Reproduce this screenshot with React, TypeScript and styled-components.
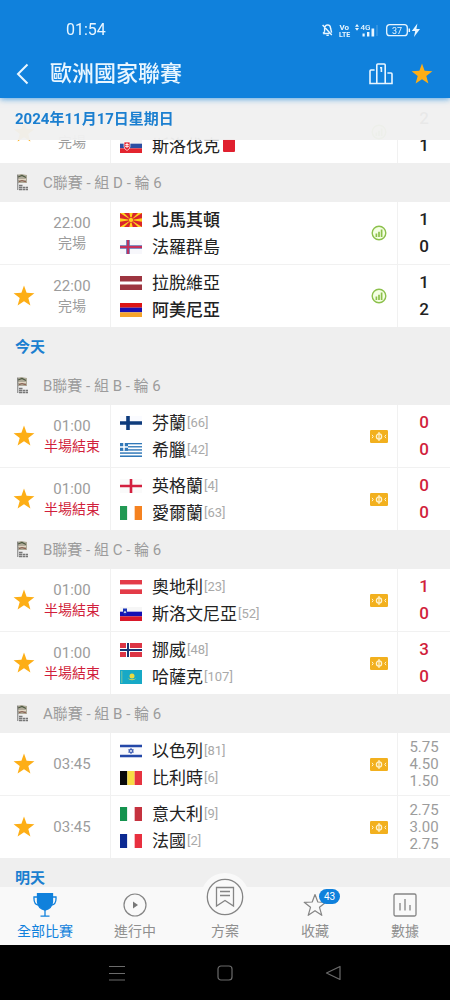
import React from "react";
import styled, { createGlobalStyle, css } from "styled-components";

const color = {
  blue: "#1081dc",
  link: "#1b7fd0",
  band: "#efefef",
  line: "#f1f1f1",
  muted: "#9c9c9c",
  ink: "#222",
  red: "#d11f3c",
  star: "#fdae16",
};

const GlobalStyle = createGlobalStyle`
  *, *::before, *::after { box-sizing: border-box; }
  body {
    margin: 0;
    background: #000;
    font-family: Roboto, "Noto Sans CJK TC", sans-serif;
    color: ${color.ink};
  }
  button { border: 0; padding: 0; background: none; font: inherit; color: inherit; cursor: pointer; }
  ul { list-style: none; margin: 0; padding: 0; }
  h1, h2, h3 { margin: 0; font-weight: inherit; font-size: inherit; }
  svg { display: block; }
`;

const Screen = styled.div`
  display: flex;
  flex-direction: column;
  height: 100vh;
`;

const Header = styled.header`
  position: relative;
  z-index: 3;
  flex: none;
  background: ${color.blue};
  color: #e9f6ff;
  box-shadow: 0 1px 6px rgba(16, 129, 220, 0.7);
`;

const StatusBar = styled.div`
  display: flex;
  align-items: center;
  justify-content: space-between;
  height: 49px;
  padding: 10px 28px 0 66px;
  font-size: 16px;
`;

const TitleBar = styled.div`
  display: flex;
  align-items: center;
  height: 49px;
  padding: 0 16px 0 14px;
`;

const IconButton = styled.button<{ $width: number }>`
  display: grid;
  place-items: center;
  width: ${(p) => p.$width}px;
  height: 40px;
`;

const Title = styled.h1`
  flex: 1;
  padding-left: 20px;
  font-size: 22px;
  font-weight: 500;
  line-height: 32px;
`;

const TitleActions = styled.div`
  display: flex;
  gap: 16px;
`;

const Feed = styled.main`
  flex: 1;
  min-height: 0;
  overflow-y: auto;
  scrollbar-width: none;
  background: #fff;
`;

const DayHeading = styled.h2<{ $pinned?: boolean }>`
  display: flex;
  align-items: center;
  height: 39px;
  padding: 0 15px;
  background: ${color.band};
  color: ${color.link};
  font-size: 15px;
  font-weight: 700;
  line-height: 22px;
  ${(p) =>
    p.$pinned &&
    css`
      position: sticky;
      top: 0;
      z-index: 2;
      height: 42px;
      margin-bottom: -39px;
      background: rgba(240, 240, 240, 0.96);
    `}
`;

const GroupHeading = styled.h3`
  display: flex;
  align-items: center;
  gap: 15px;
  height: 39px;
  padding: 0 17px;
  background: ${color.band};
  color: ${color.muted};
  font-size: 15px;
  line-height: 20px;
`;

const MatchList = styled.ul`
  > li + li { border-top: 1px solid ${color.line}; }
`;

const MatchRow = styled.li`
  display: grid;
  grid-template-columns: 48px 63px minmax(0, 1fr) 37px 52px;
  box-sizing: content-box;
  height: 62px;
`;

const StarCell = styled.div`
  display: grid;
  place-items: center;
`;

const TimeCell = styled.div`
  display: flex;
  flex-direction: column;
  justify-content: center;
  align-items: center;
  padding-right: 14px;
  border-right: 1px solid ${color.line};
  white-space: nowrap;
  color: ${color.muted};
  font-size: 15px;
  line-height: 20px;
`;

const MatchState = styled.span<{ $live?: boolean }>`
  display: flex;
  justify-content: center;
  width: 0;
  color: ${(p) => (p.$live ? color.red : color.muted)};
  font-size: 14px;
`;

const Teams = styled.div`
  display: flex;
  flex-direction: column;
  justify-content: center;
  padding-left: 9px;
`;

const TeamLine = styled.div<{ $strong?: boolean }>`
  display: flex;
  align-items: center;
  height: 27px;
  font-size: 17px;
  line-height: 26px;
  font-weight: ${(p) => (p.$strong ? 500 : 400)};
  white-space: nowrap;
`;

const FlagBox = styled.span`
  flex: none;
  width: 22px;
  margin-right: 10px;
`;

const Rank = styled.span`
  padding-left: 1px;
  color: #a9a9a9;
  font-size: 13px;
`;

const RedCard = styled.span`
  width: 12px;
  height: 13px;
  margin-left: 3px;
  border-radius: 1px;
  background: #e0202f;
`;

const MarkCell = styled.div`
  display: grid;
  place-items: center;
  border-right: 1px solid ${color.line};
`;

const ScoreCell = styled.div<{ $live?: boolean }>`
  display: flex;
  flex-direction: column;
  align-items: center;
  justify-content: center;
  color: ${(p) => (p.$live ? color.red : color.ink)};
  font-size: 17px;
  font-weight: 500;
  line-height: 27px;
`;

const OddsCell = styled(ScoreCell)`
  color: ${color.muted};
  font-size: 15px;
  font-weight: 400;
  line-height: 17px;
`;

const TabBar = styled.nav`
  position: relative;
  z-index: 2;
  flex: none;
  display: grid;
  grid-template-columns: repeat(5, minmax(0, 1fr));
  grid-template-rows: 58px;
  background: #f9f9f9;
`;

const Tab = styled.button<{ $active?: boolean }>`
  display: flex;
  flex-direction: column;
  align-items: center;
  justify-content: flex-end;
  gap: 4px;
  height: 58px;
  padding-bottom: 4px;
  color: ${(p) => (p.$active ? color.blue : "#8f8f8f")};
  font-size: 14px;
  line-height: 20px;
`;

const TabIcon = styled.span`
  position: relative;
  display: block;
`;

const RaisedIcon = styled.span`
  flex: none;
  display: grid;
  place-items: center;
  width: 48px;
  height: 48px;
  margin-bottom: -4px;
  border-radius: 50%;
  background: #f9f9f9;
`;

const Badge = styled.span`
  position: absolute;
  top: -4px;
  left: 16px;
  width: 21px;
  border-radius: 8px;
  background: ${color.blue};
  color: #fff;
  font-size: 10px;
  line-height: 15px;
  text-align: center;
`;

const SystemBar = styled.div`
  flex: none;
  display: flex;
  justify-content: center;
  align-items: center;
  gap: 68px;
  height: 55px;
  background: #000;
`;

const SystemButton = styled.button`
  display: grid;
  place-items: center;
  width: 40px;
  height: 40px;
`;

const starPath = "M11 0.6 13.6 7.8 21.4 8.2 15.3 13 17.4 20.4 11 16.2 4.6 20.4 6.7 13 0.6 8.2 8.4 7.8Z";

const Star = () => (
  <svg width="22" height="22" viewBox="0 0 22 22">
    <path d={starPath} fill={color.star} />
  </svg>
);

const DeviceStatus = () => (
  <svg width="101" height="16" viewBox="0 0 101 16" fill="none" stroke="#e9f6ff">
    <path d="M2 11.5H8.4M3.6 9.6V6.4Q4 3 6.6 2.9 9.4 3 9.6 6.2L10.6 10.6M2 11.5 3.6 9.6M5.4 13.4H7.8M1.6 3 10.8 13" strokeWidth="1.4" />
    <g fill="#e9f6ff" stroke="none" fontFamily="Roboto, sans-serif" fontWeight="700">
      <text x="18.5" y="7.5" fontSize="8">Vo</text>
      <text x="18" y="14.5" fontSize="7">LTE</text>
      <text x="39.5" y="8" fontSize="8" fontWeight="500">4G</text>
      <path d="M34 4.8 36 2 38 4.8ZM34 6 36 8.8 38 6ZM41.5 11.5H43.7V14.5H41.5ZM46 10H48.4V14.5H46ZM50.5 6.5H53.2V14.5H50.5Z" />
      <path d="M55.5 3H56.5V14H55.5Z" opacity="0.3" />
      <path d="M96.4 1.6 90.8 9H94.2L93 15 99 7H95.4Z" />
    </g>
    <rect x="65.7" y="2.7" width="20.6" height="11" rx="3" strokeWidth="1.3" />
    <path d="M88.3 6.5V10" strokeWidth="1.5" />
    <text x="76" y="11.7" fontSize="9" textAnchor="middle" fill="#e9f6ff" stroke="none">37</text>
  </svg>
);

const Back = () => (
  <svg width="14" height="22" viewBox="0 0 14 22" fill="none" stroke="#e9f6ff" strokeWidth="2">
    <path d="M12.5 1.5 3 11 12.5 20.5" />
  </svg>
);

const Podium = () => (
  <svg width="24" height="22" viewBox="0 0 24 22" fill="none" stroke="#e9f6ff" strokeWidth="1.6">
    <path d="M7.8 20.5V2Q7.8 1 8.8 1H15.2Q16.2 1 16.2 2V20.5M5.6 7H2Q1 7 1 8V20.5H23V11Q23 10 22 10H18.4M11 4.8H12.4V9" />
  </svg>
);

const LeagueMark = () => (
  <svg width="11" height="17" viewBox="0 0 11 17">
    <path d="M0 1 4 0 10 1V9H1Z" fill="#b0ab9a" />
    <path d="M1 3 5 1.5 9 3.5" stroke="#4d5a42" strokeWidth="1.2" fill="none" />
    <path d="M1 5.5H9" stroke="#e3d6c4" />
    <path d="M2 7.6 5 6.6 9 7.8" stroke="#8b5a4b" fill="none" />
    <path d="M0.8 0.5V16" stroke="#777" strokeWidth="1" />
    <path d="M2 11.5H6M2 13.5H11M2 15.5H11" stroke="#777" strokeWidth="1.3" strokeDasharray="3 0.5" />
  </svg>
);

const StatsMark = () => (
  <svg width="16" height="16" viewBox="0 0 16 16" fill="none" stroke="#8cc04c">
    <circle cx="8" cy="8" r="6.8" fill="#f4ffe3" strokeWidth="1.4" />
    <path d="M5.4 8.5V12M8 6.8V12M10.6 4.5V12" strokeWidth="1.7" />
  </svg>
);

const PitchMark = () => (
  <svg width="18" height="13" viewBox="0 0 18 13" fill="none" stroke="#fff3cf">
    <rect width="18" height="13" rx="1.2" fill="#f2b01e" stroke="none" />
    <circle cx="9" cy="6.5" r="2.6" strokeWidth="1.3" />
    <path d="M9 2V11" strokeWidth="1.2" />
    <path d="M2 4.8 3.2 6.5 2 8.2M16 4.8 14.8 6.5 16 8.2" strokeWidth="1" />
  </svg>
);

const Bands = ({ colors, vertical }: { colors: string[]; vertical?: boolean }) => (
  <>
    {colors.map((c, i) =>
      vertical ? (
        <rect key={i} x={(22 / colors.length) * i} width={22 / colors.length} height="14" fill={c} />
      ) : (
        <rect key={i} y={(14 / colors.length) * i} height={14 / colors.length} width="22" fill={c} />
      )
    )}
  </>
);

const flags: Record<string, React.ReactNode> = {
  slovakia: (
    <>
      <Bands colors={["#f1f1f1", "#2b4ea2", "#e3242f"]} />
      <path d="M4 3H10V7.5Q10 10 7 11.5 4 10 4 7.5Z" fill="#e3242f" stroke="#fff" strokeWidth="0.7" />
      <path d="M7 4V9M5.3 5.5H8.7M5 7.3H9" stroke="#fff" strokeWidth="0.9" />
    </>
  ),
  northMacedonia: (
    <>
      <rect width="22" height="14" fill="#d9252a" />
      <path d="M11 7 0 0H4ZM11 7 22 0H18ZM11 7 0 14H4ZM11 7 22 14H18ZM11 7 9.3 0H12.7ZM11 7 9.3 14H12.7ZM11 7 0 5.2V8.8ZM11 7 22 5.2V8.8Z" fill="#ffd21c" />
      <circle cx="11" cy="7" r="2.6" fill="#ffd21c" stroke="#d9252a" strokeWidth="0.7" />
    </>
  ),
  faroe: (
    <>
      <rect width="22" height="14" fill="#f7f7fb" />
      <path d="M0 7H22M8 0V14" stroke="#5f6cae" strokeWidth="3.6" />
      <path d="M0 7H22M8 0V14" stroke="#c42f5c" strokeWidth="1.8" />
    </>
  ),
  latvia: (
    <>
      <rect width="22" height="14" fill="#9d3540" />
      <rect y="5.5" width="22" height="3" fill="#fff" />
    </>
  ),
  armenia: <Bands colors={["#dd1414", "#1a0fb0", "#f6a42a"]} />,
  finland: (
    <>
      <rect width="22" height="14" fill="#fafbff" />
      <path d="M0 7H22M8 0V14" stroke="#0d3a7c" strokeWidth="3.6" />
    </>
  ),
  greece: (
    <>
      <Bands colors={["#3178b8", "#fff", "#3178b8", "#fff", "#3178b8", "#fff", "#3178b8", "#fff", "#3178b8"]} />
      <rect width="8" height="7.8" fill="#3178b8" />
      <path d="M4 0V7.8M0 3.9H8" stroke="#fff" strokeWidth="1.5" />
    </>
  ),
  england: (
    <>
      <rect width="22" height="14" fill="#fafafa" />
      <path d="M0 7H22M11 0V14" stroke="#d3203f" strokeWidth="2.6" />
    </>
  ),
  ireland: <Bands vertical colors={["#229954", "#fff", "#f58220"]} />,
  austria: <Bands colors={["#e33b48", "#fff", "#e33b48"]} />,
  slovenia: (
    <>
      <Bands colors={["#f6f6f6", "#1410b4", "#d9182a"]} />
      <path d="M3 1.5H7V5Q7 7 5 8 3 7 3 5Z" fill="#1c35b8" />
      <path d="M3.6 5.8 5 3.8 6.4 5.8Z" fill="#fff" />
    </>
  ),
  norway: (
    <>
      <rect width="22" height="14" fill="#dc3545" />
      <path d="M0 7H22M8 0V14" stroke="#fff" strokeWidth="4" />
      <path d="M0 7H22M8 0V14" stroke="#183473" strokeWidth="2" />
    </>
  ),
  kazakhstan: (
    <>
      <rect width="22" height="14" fill="#17a9c6" />
      <circle cx="12" cy="6" r="2.5" fill="#eadb3f" />
      <path d="M7.5 8.2Q12 12.5 16.5 8.2 12 10.4 7.5 8.2Z" fill="#d5d755" />
      <path d="M1.8 1V13" stroke="#7cc7a1" strokeWidth="1" />
    </>
  ),
  israel: (
    <>
      <rect width="22" height="14" fill="#f8f9fd" />
      <path d="M0 2H22M0 12H22" stroke="#2448a8" strokeWidth="2.4" />
      <path d="M11 4.3 13.4 8.3H8.6ZM11 9.7 13.4 5.7H8.6Z" fill="none" stroke="#2448a8" strokeWidth="0.8" />
    </>
  ),
  belgium: <Bands vertical colors={["#0a0a0a", "#f7dc45", "#e63440"]} />,
  italy: <Bands vertical colors={["#14934f", "#fff", "#c5323f"]} />,
  france: <Bands vertical colors={["#0c2a92", "#fff", "#e8303f"]} />,
};

interface Team {
  flag?: string;
  name: string;
  rank?: number;
  strong?: boolean;
  redCard?: boolean;
}

interface Match {
  id: string;
  starred?: boolean;
  time: string;
  state?: string;
  live?: boolean;
  teams: Team[];
  mark: "stats" | "pitch";
  scores?: number[];
  odds?: string[];
}

const HALF = "半場結束";
const FULL = "完場";

const previous: Match[] = [
  { id: "svk", starred: true, time: "", state: FULL, mark: "stats", scores: [2, 1],
    teams: [{ name: "" }, { flag: "slovakia", name: "斯洛伐克", redCard: true }] },
];

const groupD: Match[] = [
  { id: "mkd", time: "22:00", state: FULL, mark: "stats", scores: [1, 0],
    teams: [{ flag: "northMacedonia", name: "北馬其頓", strong: true }, { flag: "faroe", name: "法羅群島" }] },
  { id: "lva", starred: true, time: "22:00", state: FULL, mark: "stats", scores: [1, 2],
    teams: [{ flag: "latvia", name: "拉脫維亞" }, { flag: "armenia", name: "阿美尼亞", strong: true }] },
];

const groups: { title: string; matches: Match[] }[] = [
  {
    title: "B聯賽 - 組 B - 輪 6",
    matches: [
      { id: "fin", starred: true, time: "01:00", state: HALF, live: true, mark: "pitch", scores: [0, 0],
        teams: [{ flag: "finland", name: "芬蘭", rank: 66 }, { flag: "greece", name: "希臘", rank: 42 }] },
      { id: "eng", starred: true, time: "01:00", state: HALF, live: true, mark: "pitch", scores: [0, 0],
        teams: [{ flag: "england", name: "英格蘭", rank: 4 }, { flag: "ireland", name: "愛爾蘭", rank: 63 }] },
    ],
  },
  {
    title: "B聯賽 - 組 C - 輪 6",
    matches: [
      { id: "aut", starred: true, time: "01:00", state: HALF, live: true, mark: "pitch", scores: [1, 0],
        teams: [{ flag: "austria", name: "奧地利", rank: 23 }, { flag: "slovenia", name: "斯洛文尼亞", rank: 52 }] },
      { id: "nor", starred: true, time: "01:00", state: HALF, live: true, mark: "pitch", scores: [3, 0],
        teams: [{ flag: "norway", name: "挪威", rank: 48 }, { flag: "kazakhstan", name: "哈薩克", rank: 107 }] },
    ],
  },
  {
    title: "A聯賽 - 組 B - 輪 6",
    matches: [
      { id: "isr", starred: true, time: "03:45", mark: "pitch", odds: ["5.75", "4.50", "1.50"],
        teams: [{ flag: "israel", name: "以色列", rank: 81 }, { flag: "belgium", name: "比利時", rank: 6 }] },
      { id: "ita", starred: true, time: "03:45", mark: "pitch", odds: ["2.75", "3.00", "2.75"],
        teams: [{ flag: "italy", name: "意大利", rank: 9 }, { flag: "france", name: "法國", rank: 2 }] },
    ],
  },
];

const MatchItem = ({ match }: { match: Match }) => (
  <MatchRow>
    <StarCell>
      {match.starred && (
        <IconButton $width={40} aria-label="收藏">
          <Star />
        </IconButton>
      )}
    </StarCell>
    <TimeCell>
      <span>{match.time || "\u00a0"}</span>
      {match.state && <MatchState $live={match.live}>{match.state}</MatchState>}
    </TimeCell>
    <Teams>
      {match.teams.map((team, i) => (
        <TeamLine key={i} $strong={team.strong}>
          <FlagBox>
            {team.flag && (
              <svg width="22" height="14" viewBox="0 0 22 14">{flags[team.flag]}</svg>
            )}
          </FlagBox>
          {team.name}
          {team.rank !== undefined && <Rank>[{team.rank}]</Rank>}
          {team.redCard && <RedCard />}
        </TeamLine>
      ))}
    </Teams>
    <MarkCell>{match.mark === "stats" ? <StatsMark /> : <PitchMark />}</MarkCell>
    {match.scores && (
      <ScoreCell $live={match.live}>
        {match.scores.map((s, i) => <span key={i}>{s}</span>)}
      </ScoreCell>
    )}
    {match.odds && (
      <OddsCell>
        {match.odds.map((o, i) => <span key={i}>{o}</span>)}
      </OddsCell>
    )}
  </MatchRow>
);

const Group = ({ title, matches }: { title: string; matches: Match[] }) => (
  <section>
    <GroupHeading>
      <LeagueMark />
      {title}
    </GroupHeading>
    <MatchList>
      {matches.map((m) => <MatchItem key={m.id} match={m} />)}
    </MatchList>
  </section>
);

const Trophy = () => (
  <svg width="24" height="24" viewBox="0 0 24 24" fill="none" stroke={color.blue} strokeWidth="1.3">
    <path d="M4.5 0.5H19.5V9Q19 15.5 12 17 5 15.5 4.5 9Z" fill={color.blue} />
    <path d="M4.5 4H1Q0.5 11.5 5.5 12.2M19.5 4H23Q23.5 11.5 18.5 12.2M12 16V23M7.5 23.2H16.5" />
  </svg>
);

const Play = () => (
  <svg width="24" height="24" viewBox="0 0 24 24" fill="none" stroke="#858585" strokeWidth="1.2">
    <circle cx="12" cy="12" r="11" />
    <path d="M10 8.5 15 12 10 15.5Z" fill="#777" stroke="none" />
  </svg>
);

const Plan = () => (
  <svg width="38" height="38" viewBox="0 0 38 38" fill="none" stroke="#858585" strokeWidth="1.3">
    <circle cx="19" cy="19" r="17.7" />
    <path d="M10.5 9.5H27.5V28L19 22.5 10.5 28ZM14 13.5H24M14 17.5H24" />
  </svg>
);

const Favourite = () => (
  <svg width="24" height="24" viewBox="0 0 24 24" fill="none" stroke="#858585" strokeWidth="1.2" strokeLinejoin="round">
    <path d="M12 1.5 14.8 9 22.8 9.3 16.5 14.3 18.8 22.3 12 17.7 5.2 22.3 7.5 14.3 1.2 9.3 9.2 9Z" />
  </svg>
);

const Chart = () => (
  <svg width="24" height="24" viewBox="0 0 24 24" fill="none" stroke="#858585" strokeWidth="1.3">
    <rect x="1" y="1" width="22" height="22" rx="1.5" />
    <path d="M7 10V17.5M12 6V17.5M17 12V17.5" />
  </svg>
);

export default function App() {
  return (
    <Screen>
      <GlobalStyle />
      <Header>
        <StatusBar>
          <span>01:54</span>
          <DeviceStatus />
        </StatusBar>
        <TitleBar>
          <IconButton $width={16} aria-label="返回"><Back /></IconButton>
          <Title>歐洲國家聯賽</Title>
          <TitleActions>
            <IconButton $width={26} aria-label="積分榜"><Podium /></IconButton>
            <IconButton $width={24} aria-label="收藏聯賽"><Star /></IconButton>
          </TitleActions>
        </TitleBar>
      </Header>

      <Feed>
        <DayHeading $pinned>2024年11月17日星期日</DayHeading>
        <MatchList>
          {previous.map((m) => <MatchItem key={m.id} match={m} />)}
        </MatchList>
        <Group title="C聯賽 - 組 D - 輪 6" matches={groupD} />
        <DayHeading>今天</DayHeading>
        {groups.map((g) => <Group key={g.title} {...g} />)}
        <DayHeading>明天</DayHeading>
      </Feed>

      <TabBar>
        <Tab $active><TabIcon><Trophy /></TabIcon>全部比賽</Tab>
        <Tab><TabIcon><Play /></TabIcon>進行中</Tab>
        <Tab><RaisedIcon><Plan /></RaisedIcon>方案</Tab>
        <Tab><TabIcon><Favourite /><Badge>43</Badge></TabIcon>收藏</Tab>
        <Tab><TabIcon><Chart /></TabIcon>數據</Tab>
      </TabBar>

      <SystemBar>
        <SystemButton aria-label="選單">
          <svg width="16" height="16" viewBox="0 0 16 16" stroke="#6b6b6b" strokeWidth="1.2"><path d="M0 1.5H16M0 8.5H16M0 15H16" /></svg>
        </SystemButton>
        <SystemButton aria-label="主頁">
          <svg width="16" height="16" viewBox="0 0 16 16" fill="none" stroke="#6b6b6b" strokeWidth="1.2"><rect x="1" y="1" width="14" height="14" rx="3" /></svg>
        </SystemButton>
        <SystemButton aria-label="返回上頁">
          <svg width="16" height="16" viewBox="0 0 16 16" fill="none" stroke="#6b6b6b" strokeWidth="1.2" strokeLinejoin="round"><path d="M15 1.5V14.5L1.5 8Z" /></svg>
        </SystemButton>
      </SystemBar>
    </Screen>
  );
}
